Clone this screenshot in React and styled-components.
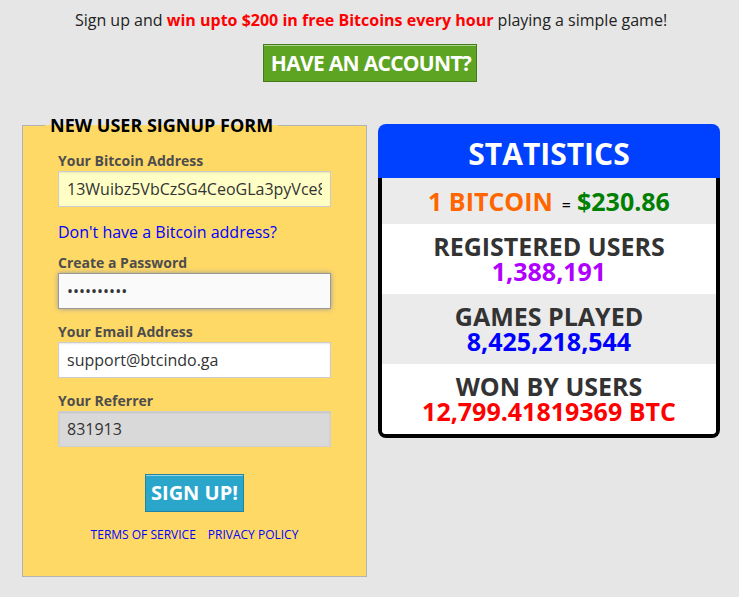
import React from "react";
import styled, { createGlobalStyle } from "styled-components";

const Global = createGlobalStyle`
  html, body { margin: 0; padding: 0; background: #e6e6e6; }
  body { font-family: "Open Sans", "Liberation Sans", sans-serif; color: #222; }
  * { box-sizing: border-box; }
`;

const Page = styled.div`
  padding: 9px 19px 20px 22px;
  display: flex;
  flex-direction: column;
  align-items: center;
`;

const Intro = styled.p`
  margin: 0;
  font-size: 16px;
  line-height: 22px;
  color: #222;
  text-align: center;
`;

const Hot = styled.strong`
  color: #ff0000;
  font-weight: 700;
`;

const Button = styled.button`
  font-family: "Open Sans", "Liberation Sans", sans-serif;
  font-weight: 700;
  font-size: 20px;
  color: #fff;
  height: 38px;
  padding: 0;
  white-space: nowrap;
  background: ${(p) => p.$bg};
  border: 1px solid ${(p) => p.$border};
  box-shadow: inset 0 1px 0 rgba(255, 255, 255, 0.5);
  cursor: pointer;
  line-height: 36px;
`;

const AccountButton = styled(Button)`
  margin-top: 13px;
  width: 214px;
  margin-left: -2px;
  font-size: 21px;
  letter-spacing: -0.7px;
  text-indent: 2px;
`;

const Main = styled.div`
  align-self: stretch;
  margin-top: 33px;
  display: flex;
  align-items: flex-start;
  gap: 11px;
`;

const FormBox = styled.fieldset`
  width: 345px;
  margin: 0;
  padding: 0;
  border: 1px solid #b3b3b3;
  background: #ffd966;
`;

const Legend = styled.legend`
  margin-left: 22px;
  padding: 0 5px;
  font-weight: 700;
  font-size: 18px;
  line-height: 20px;
  color: #000;
`;

const FormBody = styled.div`
  padding: 16px 35px 33px;
  display: flex;
  flex-direction: column;
`;

const Label = styled.label`
  font-size: 14px;
  font-weight: 700;
  line-height: 20px;
  color: #4d4d4d;
  margin-top: ${(p) => p.$mt || 0}px;
`;

const Input = styled.input`
  width: 100%;
  height: 36px;
  padding: 0 8px;
  font-family: "Open Sans", "Liberation Sans", sans-serif;
  font-size: 16px;
  color: #333;
  background: ${(p) => p.$bg || "#fff"};
  border: 1px solid ${(p) => p.$border || "#ccc"};
  box-shadow: ${(p) => (p.$focus ? "0 0 5px #999" : "inset 0 1px 2px rgba(0,0,0,0.1)")};
  outline: none;
  margin: 0;
`;

const HelpLink = styled.a`
  margin-top: 14px;
  font-size: 16px;
  line-height: 22px;
  color: #0000ff;
  text-decoration: none;
`;

const SignUp = styled(Button)`
  align-self: center;
  margin-top: 27px;
  width: 99px;
`;

const Legal = styled.div`
  margin-top: 15px;
  display: flex;
  justify-content: center;
  gap: 12px;
  font-size: 12px;
  line-height: 16px;
`;

const LegalLink = styled.a`
  color: #0000ff;
  text-decoration: none;
`;

const Stats = styled.section`
  width: 342px;
  margin-top: 9px;
  text-align: center;
`;

const StatsHead = styled.h2`
  margin: 0;
  height: 54px;
  background: #0040ff;
  border-radius: 8px 8px 0 0;
  color: #fff;
  font-size: 30px;
  font-weight: 700;
  line-height: 60px;
`;

const StatsBody = styled.div`
  border: 4px solid #000;
  border-top: none;
  border-radius: 0 0 8px 8px;
  overflow: hidden;
`;

const Row = styled.div`
  background: ${(p) => (p.$alt ? "#ebebeb" : "#fff")};
  padding: 10px 0;
  font-weight: 700;
  font-size: 25px;
  line-height: ${(p) => (p.$single ? 26 : 25)}px;
  height: ${(p) => (p.$single ? 46 : 70)}px;
`;

const Title = styled.div`
  color: #333;
`;

const Value = styled.div`
  color: ${(p) => p.$color};
`;

const Inline = styled.span`
  color: ${(p) => p.$color};
`;

const Eq = styled.span`
  font-weight: 400;
  font-size: 16px;
  line-height: 1;
  color: #000;
  margin: 0 6px 0 9px;
`;

export default function App() {
  return (
    <>
      <Global />
      <Page>
        <Intro>
          Sign up and <Hot>win upto $200 in free Bitcoins every hour</Hot> playing a simple game!
        </Intro>
        <AccountButton $bg="#5da423" $border="#457a1a">HAVE AN ACCOUNT?</AccountButton>
        <Main>
          <FormBox>
            <Legend>NEW USER SIGNUP FORM</Legend>
            <FormBody>
              <Label>Your Bitcoin Address</Label>
              <Input
                $bg="#ffffc5"
                defaultValue="13Wuibz5VbCzSG4CeoGLa3pyVce8XKfJ7a"
                readOnly
              />
              <HelpLink href="#">Don't have a Bitcoin address?</HelpLink>
              <Label $mt={10}>Create a Password</Label>
              <Input type="password" $bg="#fafafa" $border="#999" $focus defaultValue="abcdefghij" readOnly />
              <Label $mt={13}>Your Email Address</Label>
              <Input defaultValue="support@btcindo.ga" readOnly />
              <Label $mt={13}>Your Referrer</Label>
              <Input $bg="#d9d9d9" $border="#cfcfcf" defaultValue="831913" readOnly />
              <SignUp $bg="#2ba6cb" $border="#2284a1">SIGN UP!</SignUp>
              <Legal>
                <LegalLink href="#">TERMS OF SERVICE</LegalLink>
                <LegalLink href="#">PRIVACY POLICY</LegalLink>
              </Legal>
            </FormBody>
          </FormBox>
          <Stats>
            <StatsHead>STATISTICS</StatsHead>
            <StatsBody>
              <Row $alt $single>
                <Inline $color="#ff6600">1 BITCOIN</Inline>
                <Eq>=</Eq>
                <Inline $color="#008000">$230.86</Inline>
              </Row>
              <Row>
                <Title>REGISTERED USERS</Title>
                <Value $color="#b000ff">1,388,191</Value>
              </Row>
              <Row $alt>
                <Title>GAMES PLAYED</Title>
                <Value $color="#0000ff">8,425,218,544</Value>
              </Row>
              <Row>
                <Title>WON BY USERS</Title>
                <Value $color="#ff0000">12,799.41819369 BTC</Value>
              </Row>
            </StatsBody>
          </Stats>
        </Main>
      </Page>
    </>
  );
}
